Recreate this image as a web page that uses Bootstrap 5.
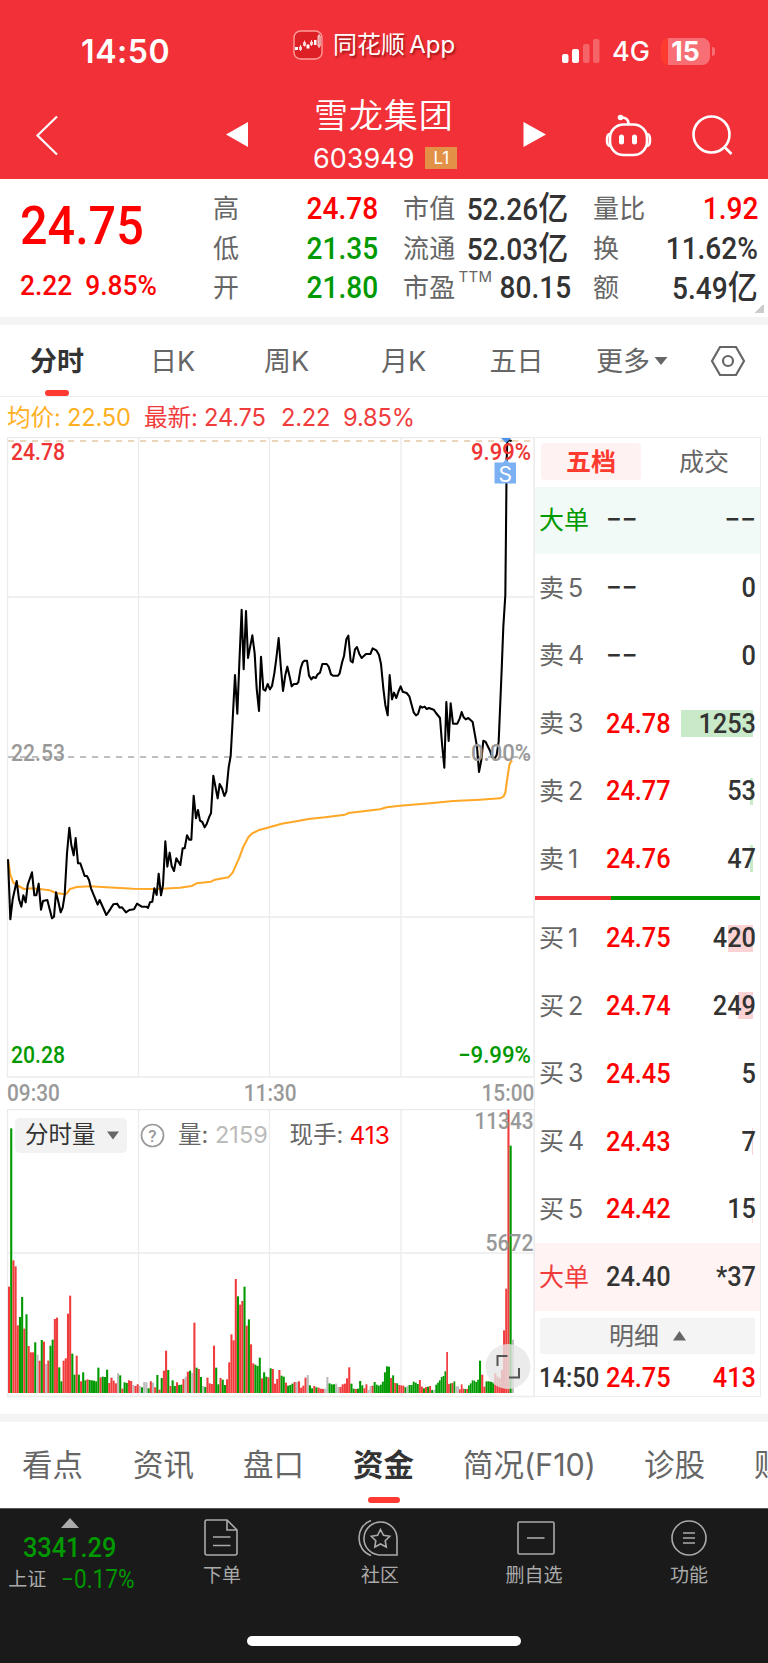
<!DOCTYPE html>
<html lang="zh-CN">
<head>
<meta charset="utf-8">
<meta name="viewport" content="width=device-width, initial-scale=1">
<title>雪龙集团 603949</title>
<link rel="stylesheet" href="https://cdn.jsdelivr.net/npm/bootstrap@5.3.0/dist/css/bootstrap.min.css">
<style>
:root{--up:#f00;--brand:#f23037;--down:#090;--ink:#333;--dim:#666;--rule:#ededed}
body{width:768px;height:1663px;overflow:hidden;background:#fff;color:var(--dim);font-family:Inter,"Noto Sans CJK SC",sans-serif;line-height:1}
svg{display:block;flex:none}
.din{font-family:Roboto,"Noto Sans CJK SC",sans-serif;font-weight:500;display:inline-block;transform:scaleX(.905);transform-origin:right center;white-space:nowrap}
.din.start{transform-origin:left center}
.din.mid{transform-origin:center}
.din .yi{font-size:1.07em;font-weight:500}
.up{color:var(--up)}.down{color:var(--down)}.ink{color:var(--ink)}
/* header */
.app-head{background:var(--brand);height:179px;color:#fff}
.status{height:97px;padding-left:81px}
.clock{font-size:32px;font-weight:600;width:212px;padding-top:36px;line-height:32px;letter-spacing:.6px}
.brand-chip{width:268px;padding-top:30px;gap:10px;font-size:24px;word-spacing:-2.5px;text-shadow:1.5px 2px 2px rgba(90,0,0,.55)}
.radio{gap:13px;padding-top:38px;font-size:27px;font-weight:500}
.battery{width:49px;height:27px;margin-left:-2px;border-radius:8px;background:linear-gradient(90deg,#ff3b30 7px,#f76f74 7px);font-size:26.5px;font-weight:700;line-height:27px;text-align:center;position:relative}
.battery::after{content:"";position:absolute;right:-5px;top:9px;width:3px;height:9px;background:#f76f74;border-radius:0 4px 4px 0}
.titlebar{height:82px}
.titlebar .name{font-size:34px;letter-spacing:.9px;line-height:37px;font-weight:350}
.code{font-size:27px;line-height:30px;margin-top:10px;margin-left:-1px;gap:10px}
.code .lv{background:#e49148;width:32px;height:22px;font-size:17px;line-height:22px;margin-top:3px;margin-left:1px}
/* quote */
.quote{height:138px;padding:9px 0 0 20px;font-size:26px}
.quote .last{width:193px;flex:none}
.last .big{font-size:53px;line-height:53px;margin-top:12px;transform:scaleX(.915)}
.last .chg{font-size:28px;line-height:28px;margin-top:19px;transform:scaleX(.94)}
.pair{width:165px;margin-right:25px;flex:none}
.pair>div{height:39.5px;line-height:41px;display:flex;justify-content:space-between;white-space:nowrap;letter-spacing:.3px}
.pair .din{font-size:31px;letter-spacing:0}
.pair sup{font-size:15px;top:-15px;line-height:0;margin-left:3px}
.fold{width:9px;height:9px;background:linear-gradient(135deg,transparent 50%,#ccc 50%);right:4px;bottom:4px}
.band{height:8px;background:#f4f4f4}
.period{height:72px;border-bottom:1px solid var(--rule);font-size:27px}
.period span,.subnav span{position:relative;line-height:73px;height:71px;white-space:nowrap;display:block;flex:none}
.period .on,.subnav .on{color:var(--ink);font-weight:600}
.period .on::after,.subnav .on::after{content:"";position:absolute;left:50%;bottom:0;width:24px;height:6px;margin-left:-12px;border-radius:3px;background:#ff3a32}
.legend-row{height:40px;padding-left:7px;font-size:23.7px;line-height:42px;color:#f03c3c}
.legend-row span{white-space:pre;letter-spacing:-.2px}
/* chart */
.chart-col{width:535px;flex:none}
.axis{height:31px;padding:0 1px 0 7px;font-size:23px;color:#999;line-height:31px}
svg text{font-family:Roboto,sans-serif;font-weight:500;font-size:23px}
.vol-tools{left:15px;top:8px;height:36px;font-size:23.5px}
.pick{background:#f2f2f2;border-radius:5px;width:112px;height:35px;padding-left:10px;color:var(--ink);gap:11px}
/* book */
.book{width:227px;flex:none;margin-left:-1px;height:960px;border:1px solid var(--rule);font-size:25px}
.book-tabs{height:48.5px;padding:5px 6px}
.book-tabs div{width:101px;height:37px;line-height:38px;text-align:center;border-radius:4px}
.book-tabs .on{background:#fff2f2;color:#ff3b30;font-weight:600}
.lvl{height:67.75px;padding:0 4px 0 4px;display:grid;grid-template-columns:67px 70px 1fr;align-items:center;position:relative}
.lvl>*{position:relative}
.lvl>span:not(.din){word-spacing:-3px}
.lvl .din{font-size:28px}
.lvl .dash{transform:scaleX(1)}
.lvl i{position:absolute;right:7px;top:20px;height:27px}
.sell i{background:#c9eac9}.buy i{background:#fbd3d5}
.big-sell{background:#f1faf6}.big-buy{background:#fff3f3}
.ratio{height:4px;background:linear-gradient(90deg,var(--brand) 76px,var(--down) 76px)}
.detail{height:36px;margin:7px 5px 0 5px;background:#f4f4f4;gap:14px}
/* sub navigation */
.subnav{height:86px;font-size:30.5px;padding-left:22px;overflow:hidden}
.subnav span{line-height:86px;height:86px}
.subnav .on::after{width:32px;margin-left:-16px;bottom:5px}
/* dock */
.dock{height:156px;background:#1a1a1a;color:#aaa;font-size:19px;border-top:1px solid #555}
.dock .cell{position:absolute;top:10px;width:90px;display:flex;flex-direction:column;align-items:center}
.cell svg{height:38px}
.cell div{margin-top:9px;line-height:20px}
.home{left:247px;top:127px;width:274px;height:10px;border-radius:5px;background:#fff}
</style>
<script src="https://cdn.jsdelivr.net/npm/bootstrap@5.3.0/dist/js/bootstrap.bundle.min.js"></script>
</head>
<body>
<header class="app-head">
  <div class="status d-flex">
    <div class="clock">14:50</div>
    <div class="brand-chip d-flex align-items-start">
      <svg width="30" height="30" viewBox="0 0 30 30"><rect x="1" y="1" width="28" height="28" rx="6.5" fill="#dc2026" stroke="#ff9c9c" stroke-width="1.4"/><path d="M2 17h3v3H2zM13.5 14.500h3v4h-3zM21 10h2.500v5H21z" fill="#fff"/><path d="M7.500 15v6M6.500 17h2v2.500h-2zM11.500 10.500v6M10.500 12.500h2v3h-2zM18.500 10v6M17.500 12h2v2.500h-2zM26 4v14M25 6h2.200v10H25z" fill="none" stroke="#fff" stroke-width=".8"/></svg>
      <span class="lh-1" style="padding-top:3px">同花顺 App</span>
    </div>
    <div class="radio d-flex">
      <svg width="39" height="26" viewBox="0 0 39 26"><g fill="#fff"><rect x="1" y="16" width="6.500" height="9" rx="2"/><rect x="11" y="11" width="7" height="14" rx="2"/><g opacity=".25"><rect x="22" y="6" width="6.500" height="19" rx="2"/><rect x="32" y="1" width="6.500" height="24" rx="2"/></g></g></svg>
      <span class="lh-1" style="margin-left:-1px">4G</span>
      <div class="battery">15</div>
    </div>
  </div>
  <div class="titlebar d-flex">
    <svg width="226" height="82" viewBox="0 97 226 82"><path d="M57 116.500L37.500 135.500L57 154.500" fill="none" stroke="#fff" stroke-width="2.200"/></svg>
    <svg width="88" height="82" viewBox="226 97 88 82"><path d="M226 134.500L248 122v25z" fill="#fff"/></svg>
    <div style="width:147px" class="text-nowrap">
      <div class="name">雪龙集团</div>
      <div class="code d-flex"><span>603949</span><span class="lv text-center">L1</span></div>
    </div>
    <svg width="307" height="82" viewBox="461 97 307 82" fill="none" stroke="#fff" stroke-width="2.600"><path d="M523.500 122v25L546 134.500z" fill="#fff" stroke="none"/><rect x="610" y="124.500" width="37" height="30.500" rx="13.500"/><path d="M610 134c-4 0-4 12 0 12M647 134c4 0 4 12 0 12" /><path d="M628.500 124c0-4.500-2.500-6.500-7-6.500" /><circle cx="620.500" cy="117.500" r="2.800" fill="#fff" stroke="none"/><path d="M621.500 137v5M634.500 137v5" stroke-width="5" stroke-linecap="round"/><circle cx="711.500" cy="134.500" r="18"/><path d="M724.500 147l7 7"/></svg>
  </div>
</header>

<section class="quote d-flex position-relative">
  <div class="last">
    <div class="din start up big">24.75</div>
    <div class="din start up chg">2.22&nbsp; 9.85%</div>
  </div>
  <div class="pair"><div>高<span class="din up">24.78</span></div><div>低<span class="din down">21.35</span></div><div>开<span class="din down">21.80</span></div></div>
  <div class="pair"><div>市值<span class="din ink">52.26<span class="yi">亿</span></span></div><div>流通<span class="din ink">52.03<span class="yi">亿</span></span></div><div><span>市盈<sup>TTM</sup></span><span class="din ink">80.15</span></div></div>
  <div class="pair me-0"><div>量比<span class="din up">1.92</span></div><div>换<span class="din ink">11.62%</span></div><div>额<span class="din ink">5.49<span class="yi">亿</span></span></div></div>
  <div class="fold position-absolute"></div>
</section>
<div class="band"></div>
<nav class="period d-flex">
  <span class="on" style="margin-left:30px;margin-right:66px">分时</span>
  <span style="width:114px">日K</span><span style="width:117px">周K</span><span style="width:108.500px">月K</span><span style="width:106.500px">五日</span><span style="width:57px">更多</span>
  <svg width="57" height="71" viewBox="0 0 57 71"><path d="M1.500 32h13l-6.500 8z" fill="#666"/></svg>
  <svg width="36" height="71" viewBox="0 0 36 71" fill="none" stroke="#666" stroke-width="2.200"><path d="M2 36L10 22h16l8 14l-8 14H10z"/><circle cx="18" cy="36" r="5"/></svg>
</nav>
<div class="legend-row d-flex"><span style="color:#ffb01f;width:137px">均价: 22.50</span><span style="width:137px">最新: 24.75</span><span style="width:62px">2.22</span><span>9.85%</span></div>

<main class="d-flex" style="height:977px">
  <div class="chart-col">
    <svg width="535" height="641" viewBox="0 437 535 641">
      <path d="M7.500 437V1078M7 437.500H535M7 597H535M7 917H535M7 1077H535M138.500 437V1077M269.500 437V1077M401 437V1077M534 437V1077" stroke="#ececec" stroke-width="1.300" fill="none"/>
      <path d="M8 441H533" stroke="#e3c9a4" stroke-width="1.500" stroke-dasharray="6.200 5.800"/>
      <path d="M8 757H533" stroke="#aaa" stroke-width="1.700" stroke-dasharray="6.200 5.800"/>
      <g transform="translate(0 430) scale(.33333)" fill="none" stroke-linejoin="round">
        <polyline stroke="#ffa726" stroke-width="6.200" points="24,1288 31,1335 40,1358 50,1365 72,1377 98,1375 150,1381 168,1389 195,1393 200,1390 210,1377 230,1371 270,1369 320,1372 400,1376 470,1377 540,1373 575,1368 590,1360 633,1355 645,1349 685,1342 698,1328 718,1283 730,1250 745,1222 757,1210 775,1201 800,1194 845,1181 889,1174 926,1167 975,1162 1035,1154 1046,1149 1140,1138 1160,1132 1200,1127 1290,1120 1360,1113 1440,1109 1500,1105 1510,1100 1516,1088 1522,1045 1528,1005 1532,996 1537,992"/>
        <polyline stroke="#000" stroke-width="6.200" points="24,1288 31,1468 38,1408 50,1353 57,1408 64,1430 70,1396 77,1417 83,1365 96,1327 103,1396 109,1396 116,1361 123,1439 129,1413 142,1410 149,1438 156,1465 162,1460 168,1387 175,1415 182,1447 188,1433 194,1395 201,1270 208,1193 214,1245 221,1276 227,1224 234,1300 241,1300 254,1338 261,1338 267,1350 273,1375 293,1424 299,1410 319,1455 326,1445 340,1423 351,1421 359,1433 366,1432 378,1447 388,1440 402,1438 411,1421 425,1430 440,1430 444,1434 450,1417 457,1415 463,1375 470,1395 476,1331 483,1396 489,1365 496,1234 502,1310 509,1268 515,1308 522,1323 529,1285 541,1305 548,1255 554,1255 561,1216 568,1229 574,1229 581,1097 588,1165 594,1140 600,1172 607,1176 614,1192 620,1182 628,1160 633,1150 640,1037 653,1105 659,1062 666,1075 673,1098 679,1085 686,1012 692,978 698,870 705,735 712,851 718,700 725,539 731,718 738,543 744,684 757,616 764,670 770,775 777,843 783,680 790,778 796,782 803,762 810,778 816,768 823,730 829,685 836,624 842,705 849,783 856,735 862,710 869,740 875,769 882,762 890,762 895,757 902,715 908,697 914,692 921,692 927,737 934,748 940,741 947,744 953,733 960,728 967,702 980,702 986,710 993,733 999,737 1014,737 1019,730 1026,698 1032,678 1039,628 1045,617 1052,693 1058,697 1065,658 1071,651 1078,672 1085,684 1098,672 1111,672 1118,655 1129,661 1137,675 1143,702 1150,775 1156,825 1163,856 1169,735 1176,808 1182,788 1189,804 1196,783 1202,769 1208,785 1220,789 1228,799 1235,825 1241,847 1248,856 1254,852 1261,829 1267,833 1274,830 1280,837 1287,834 1301,839 1308,849 1320,864 1326,940 1333,1013 1339,816 1346,933 1352,820 1359,881 1372,881 1379,866 1385,846 1391,862 1397,868 1405,864 1418,876 1424,910 1431,950 1437,1026 1444,990 1450,932 1457,936 1470,962 1476,980 1483,988 1490,975 1496,935 1505,720 1510,590 1516,495 1518,300 1520,90 1522,30 1535,33"/>
      </g>
      <path d="M501 438h10l-5 5z" fill="#4d94ee"/>
      <g fill="#e33"><text x="11" y="460" textLength="54" lengthAdjust="spacingAndGlyphs">24.78</text><text x="471" y="460" textLength="60" lengthAdjust="spacingAndGlyphs">9.99%</text></g>
      <g fill="#999"><text x="11" y="761" textLength="54" lengthAdjust="spacingAndGlyphs">22.53</text><text x="471" y="761" textLength="60" lengthAdjust="spacingAndGlyphs">0.00%</text></g>
      <g fill="#090"><text x="11" y="1063" textLength="54" lengthAdjust="spacingAndGlyphs">20.28</text><text x="458" y="1063" textLength="73" lengthAdjust="spacingAndGlyphs">−9.99%</text></g>
      <path d="M503 462.500l3-3.500 3 3.500h7v21h-21.500v-21z" fill="#7bb0f2"/>
      <text x="505.300" y="481.500" text-anchor="middle" fill="#fff" style="font-size:21px;font-family:Inter;font-weight:400">S</text>
    </svg>
    <div class="axis d-flex justify-content-between"><span class="din start">09:30</span><span class="din mid">11:30</span><span class="din">15:00</span></div>
    <div class="position-relative">
      <svg width="535" height="290" viewBox="0 1109 535 290">
        <path d="M7.500 1109V1397M7 1109.500H535M7 1253H535M7 1396.500H535M138.500 1109V1397M269.500 1109V1397M401 1109V1397M534 1109V1397" stroke="#ececec" stroke-width="1.300" fill="none"/>
        <g id="bars" transform="translate(0 1040) scale(.33333)"></g>
        <g fill="#999"><text x="474.500" y="1129" textLength="59" lengthAdjust="spacingAndGlyphs">11343</text><text x="485.500" y="1251" textLength="48" lengthAdjust="spacingAndGlyphs">5672</text></g>
        <circle cx="508" cy="1366.500" r="22.500" fill="#e6e6e6" opacity=".78"/>
        <path d="M497.500 1366V1356H507.500M509 1377.500H519V1368" fill="none" stroke="#555" stroke-width="2"/>
      </svg>
      <div class="vol-tools position-absolute d-flex align-items-center text-nowrap">
        <div class="pick d-flex align-items-center"><span>分时量</span><svg width="12" height="9" viewBox="0 0 12 9"><path d="M0 .5h12L6 8.500z" fill="#666"/></svg></div>
        <svg style="margin-left:13px;margin-right:13px" width="25" height="25" viewBox="0 0 25 25"><circle cx="12.500" cy="12.500" r="11" fill="none" stroke="#999" stroke-width="1.700"/><text x="12.500" y="18.500" text-anchor="middle" fill="#999" style="font-size:17px">?</text></svg>
        <span style="width:37px">量:</span><span style="color:#bbb;width:74.500px;font-size:23.500px;letter-spacing:0">2159</span><span style="width:60px">现手:</span><span class="up" style="font-size:24.500px">413</span>
      </div>
    </div>
  </div>
  <aside class="book">
    <div class="book-tabs d-flex"><div class="on">五档</div><div style="margin-left:13px">成交</div></div>
    <div class="lvl big-sell"><span class="down">大单</span><span class="din start ink dash">−−</span><span class="din ink text-end dash">−−</span></div>
    <div class="lvl sell"><span>卖 5</span><span class="din start ink dash">−−</span><span class="din ink text-end">0</span></div>
    <div class="lvl sell"><span>卖 4</span><span class="din start ink dash">−−</span><span class="din ink text-end">0</span></div>
    <div class="lvl sell"><i style="width:72px"></i><span>卖 3</span><span class="din start up">24.78</span><span class="din ink text-end">1253</span></div>
    <div class="lvl sell"><i style="width:3px"></i><span>卖 2</span><span class="din start up">24.77</span><span class="din ink text-end">53</span></div>
    <div class="lvl sell"><i style="width:3px"></i><span>卖 1</span><span class="din start up">24.76</span><span class="din ink text-end">47</span></div>
    <div class="ratio" style="margin-top:2.500px;margin-bottom:5px"></div>
    <div class="lvl buy"><i style="width:25px"></i><span>买 1</span><span class="din start up">24.75</span><span class="din ink text-end">420</span></div>
    <div class="lvl buy"><i style="width:15px"></i><span>买 2</span><span class="din start up">24.74</span><span class="din ink text-end">249</span></div>
    <div class="lvl buy"><span>买 3</span><span class="din start up">24.45</span><span class="din ink text-end">5</span></div>
    <div class="lvl buy"><i style="width:1px"></i><span>买 4</span><span class="din start up">24.43</span><span class="din ink text-end">7</span></div>
    <div class="lvl buy"><i style="width:1px"></i><span>买 5</span><span class="din start up">24.42</span><span class="din ink text-end">15</span></div>
    <div class="lvl big-buy"><span style="color:#f03c3c">大单</span><span class="din start ink">24.40</span><span class="din ink text-end">*37</span></div>
    <div class="detail d-flex align-items-center justify-content-center"><span>明细</span><svg width="13" height="10" viewBox="0 0 13 10"><path d="M0 9.500h13L6.500 0z" fill="#666"/></svg></div>
    <div class="lvl" style="height:48px"><span class="din start ink" style="transform:scaleX(.85)">14:50</span><span class="din start up">24.75</span><span class="din up text-end">413</span></div>
  </aside>
</main>

<div class="band"></div>
<nav class="subnav d-flex"><span style="width:111px">看点</span><span style="width:110px">资讯</span><span style="width:110px">盘口</span><span class="on" style="width:61px;margin-right:49px">资金</span><span style="width:181px">简况(F10)</span><span style="width:110px">诊股</span><span>财务</span></nav>
<footer class="dock position-relative">
  <div class="cell text-nowrap" style="left:0;width:139px;top:9px">
    <svg style="height:10px" width="18" height="10" viewBox="0 0 18 10"><path d="M0 10h18L9 0z" fill="#aaa"/></svg>
    <div class="din mid down" style="font-size:28px;line-height:28px;margin-top:6px">3341.29</div>
    <div class="d-flex align-items-center" style="gap:15px;margin-top:7px;margin-left:12px"><span>上证</span><span class="din start down" style="font-size:25px;line-height:22px;font-weight:400">−0.17%</span></div>
  </div>
  <div class="cell" style="left:177px"><svg style="margin-left:-3px" width="36" height="38" viewBox="0 0 36 38" fill="none" stroke="#aaa" stroke-width="1.600"><path d="M3 1H24L34 11V34a2 2 0 0 1-2 2H4a2 2 0 0 1-2-2V3a2 2 0 0 1 2-2M24 1V11H34M10 18H27.500M10 26.500H27.500"/></svg><div>下单</div></div>
  <div class="cell" style="left:335px"><svg style="margin-left:-4px" width="42" height="38" viewBox="0 0 42 38" fill="none" stroke="#aaa" stroke-width="1.600"><path d="M14 1.500C-2 7-2 31 14 36.500M40 36H22A16.500 16.500 0 1 1 40 19.500zM23.500 10.500l3 5.800 6.300.9-4.600 4.500 1.100 6.300-5.800-3-5.700 3 1-6.300-4.500-4.500 6.300-.9z"/></svg><div>社区</div></div>
  <div class="cell" style="left:489px"><svg style="margin-left:3px" width="40" height="38" viewBox="0 0 40 38" fill="none" stroke="#aaa" stroke-width="1.600"><rect x="2" y="3" width="36" height="32" rx="1.500"/><path d="M11 19H28.500"/></svg><div>删自选</div></div>
  <div class="cell" style="left:644px"><svg width="38" height="38" viewBox="0 0 38 38" fill="none" stroke="#aaa" stroke-width="1.600"><circle cx="19" cy="19" r="17"/><path d="M13 14H25M13 19H25M13 24H25"/></svg><div>功能</div></div>
  <div class="home position-absolute"></div>
</footer>
<script>
// minute volume: colour letter + bar top; each run starts at its own x
const runs = [
 [24,"r740 g265 r661 r679 r856 g831 g771 r866 g823 r918 r937 r937 g907 n944 r962 g900 r905 n972 r962 g917 g899 r837 r833 g982 g1024 r962 r955 r821 r767 g941 g1004"],
 [227,"r947 g1004 r1024 g997 g1021 r1018 g1020 g1021 g1022 g1024"],
 [292,"g983 r1012 g1010 g1011 g989 r1029 r1013 r1022 r1030"],
 [351,"n1000 g1006 r1046 g1027 g1029 r1021 r1023 n1035 r1038 r1033 n1038 g1042 n1026 n1027 g1045 r1024 n1028 r1042"],
 [469,"g1005 r1049 g1014 r992 r932 g990 r1038 g1021 g1038 r1027 g1035 g1034 r1017 n1010"],
 [560.500,"r995 g992 n999 r848 g983 r987 g1011 n1038 g1041 r1013 r1030 r1032 r917 g983 g1033 r1014 g1019 g1035 r1018 r967 r883 r901 r717 g769 r794 r783 g740 r857 g838 r913 r970 g974 g978 g953 r1015 g997 g1010 r1012 g985 r987"],
 [822,"r1031 r1017 r990 g1007 g1010 r1028 g1037 g1035 g1031 r1026 n1026 r1024 r1043 r1037 r1013 n1005 g1036 g1045 r1038 g1042 r1043 r1046 r1047 n1046"],
 [979,"n1011 g1030 g1033 g1033 n1031 n1041 r1041 r1033 r1031 r1015 r982 g1031 g1046 r1047 g1046 g1023"],
 [1084,"g1036 r1045 r1033 n1050 n1038 r1037 g1026 g1034 g1037 g1034 g1025 g997 g979 g980 r1014 g1006 r1029 g1030 r1035 r1036 r1037 g1042 n1038 g1035 g1035 g1025 g1028 g1032 r1020 r1040 g1045 r1041 g1040 r1038 g1050 n1049"],
 [1306,"g1034 g1028 g1021 g1011 g1008 g994 r936 r1032 g1030 r1029 g1024 n1039 n1039 r1048 r1033 r1046 g1047 r1047 g1036 g1030 g1021 g1022 g1026 g1019"],
 [1437,"g962 r1004 r1040 g1024 g1024 g1025 g1026 r1000 r1010 r1015 r990 r871 r746 r209 g317 n899"]
];
const tint = {r:"#f03c3c", g:"#090", n:"#bbb"}, NS = "http://www.w3.org/2000/svg";
runs.forEach(([x, list], k) => {
  const items = list.split(" "), end = k + 1 < runs.length ? runs[k+1][0] : x + items.length * 6.56;
  const step = (end - x) / items.length;
  items.forEach((s, i) => {
    const r = document.createElementNS(NS, "rect"), top = +s.slice(1);
    r.setAttribute("x", x + i * step); r.setAttribute("y", top);
    r.setAttribute("width", Math.max(step - .3, 5)); r.setAttribute("height", 1059 - top);
    r.setAttribute("fill", tint[s[0]]);
    document.getElementById("bars").appendChild(r);
  });
});
</script>
</body>
</html>
